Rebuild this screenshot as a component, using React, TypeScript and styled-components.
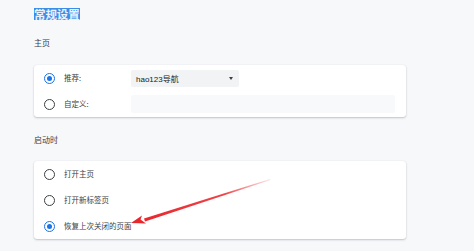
import React from "react";
import styled, { createGlobalStyle } from "styled-components";

const Global = createGlobalStyle`
  html, body { margin: 0; padding: 0; }
  body {
    background: #f7f8fa;
    font-family: "Noto Sans CJK SC", "Noto Sans", sans-serif;
    width: 474px;
    height: 251px;
    overflow: hidden;
  }
`;

const Page = styled.div`
  position: relative;
  width: 474px;
  height: 251px;
  padding: 8px 0 0 34px;
  box-sizing: border-box;
`;

const Title = styled.h1`
  margin: 0;
  display: flex;
  font-size: 11.5px;
  font-weight: 700;
  color: #202124;
`;

const Selected = styled.span`
  display: block;
  height: 12px;
  line-height: 12px;
  background: #3a8ee6;
  color: #eaf2ff;
  letter-spacing: -0.1px;
`;

const SectionLabel = styled.div<{ $top: number }>`
  margin-top: ${(p) => p.$top}px;
  font-size: 8px;
  line-height: 10px;
  color: #3c4043;
`;

const Card = styled.div<{ $top: number }>`
  margin-top: ${(p) => p.$top}px;
  width: 372px;
  background: #fff;
  border-radius: 3px;
  box-shadow: 0 1px 2px rgba(60, 64, 67, 0.28), 0 0 1px rgba(60, 64, 67, 0.12);
  display: flex;
  flex-direction: column;
`;

const Row = styled.div`
  height: 26px;
  display: flex;
  align-items: center;
  padding-left: 10px;
`;

const Radio = styled.span<{ $on?: boolean }>`
  width: 11px;
  height: 11px;
  box-sizing: border-box;
  border-radius: 50%;
  border: 1.6px solid ${(p) => (p.$on ? "#1a73e8" : "#3c4043")};
  display: flex;
  align-items: center;
  justify-content: center;
  flex: none;
  &::after {
    content: "";
    width: 5px;
    height: 5px;
    border-radius: 50%;
    background: ${(p) => (p.$on ? "#1a73e8" : "transparent")};
  }
`;

const Label = styled.span<{ $w?: number }>`
  margin-left: 9px;
  font-size: 7.5px;
  line-height: 10px;
  color: #3c4043;
  ${(p) => (p.$w ? `width: ${p.$w}px; flex: none;` : "")}
`;

const Select = styled.div`
  width: 108px;
  height: 17px;
  box-sizing: border-box;
  background: #f1f3f4;
  border-radius: 2px;
  display: flex;
  align-items: center;
  justify-content: space-between;
  padding: 0 6px 0 5px;
  font-family: "Liberation Sans", "Noto Sans CJK SC", sans-serif;
  font-size: 8px;
  color: #202124;
  &::after {
    content: "";
    border-left: 2.5px solid transparent;
    border-right: 2.5px solid transparent;
    border-top: 3px solid #3c4043;
  }
`;

const Input = styled.div`
  width: 264px;
  height: 18px;
  background: #f8f9fa;
  border-radius: 2px;
`;

const Arrow = styled.svg`
  position: absolute;
  left: 0;
  top: 0;
  pointer-events: none;
`;

export default function App() {
  return (
    <>
      <Global />
      <Page>
        <Title>
          <Selected>常规设置</Selected>
        </Title>
        <SectionLabel $top={18}>主页</SectionLabel>
        <Card $top={17}>
          <Row>
            <Radio $on />
            <Label $w={67}>推荐:</Label>
            <Select>hao123导航</Select>
          </Row>
          <Row>
            <Radio />
            <Label $w={67}>自定义:</Label>
            <Input />
          </Row>
        </Card>
        <SectionLabel $top={18}>启动时</SectionLabel>
        <Card $top={16}>
          <Row>
            <Radio />
            <Label>打开主页</Label>
          </Row>
          <Row>
            <Radio />
            <Label>打开新标签页</Label>
          </Row>
          <Row>
            <Radio $on />
            <Label>恢复上次关闭的页面</Label>
          </Row>
        </Card>
        <Arrow width="474" height="251" viewBox="0 0 474 251">
          <defs>
            <linearGradient id="fade" x1="270" y1="179" x2="140" y2="220" gradientUnits="userSpaceOnUse">
              <stop offset="0" stopColor="#f04a4f" stopOpacity="0.15" />
              <stop offset="0.35" stopColor="#ec2f35" stopOpacity="0.9" />
              <stop offset="1" stopColor="#e8262c" stopOpacity="1" />
            </linearGradient>
          </defs>
          <polygon points="270,179 270.4,180 145,221.4 144,218.6" fill="url(#fade)" />
          <polygon points="131,223 142,215.5 140.5,219.5 146,223.5" fill="#e8262c" />
        </Arrow>
      </Page>
    </>
  );
}
